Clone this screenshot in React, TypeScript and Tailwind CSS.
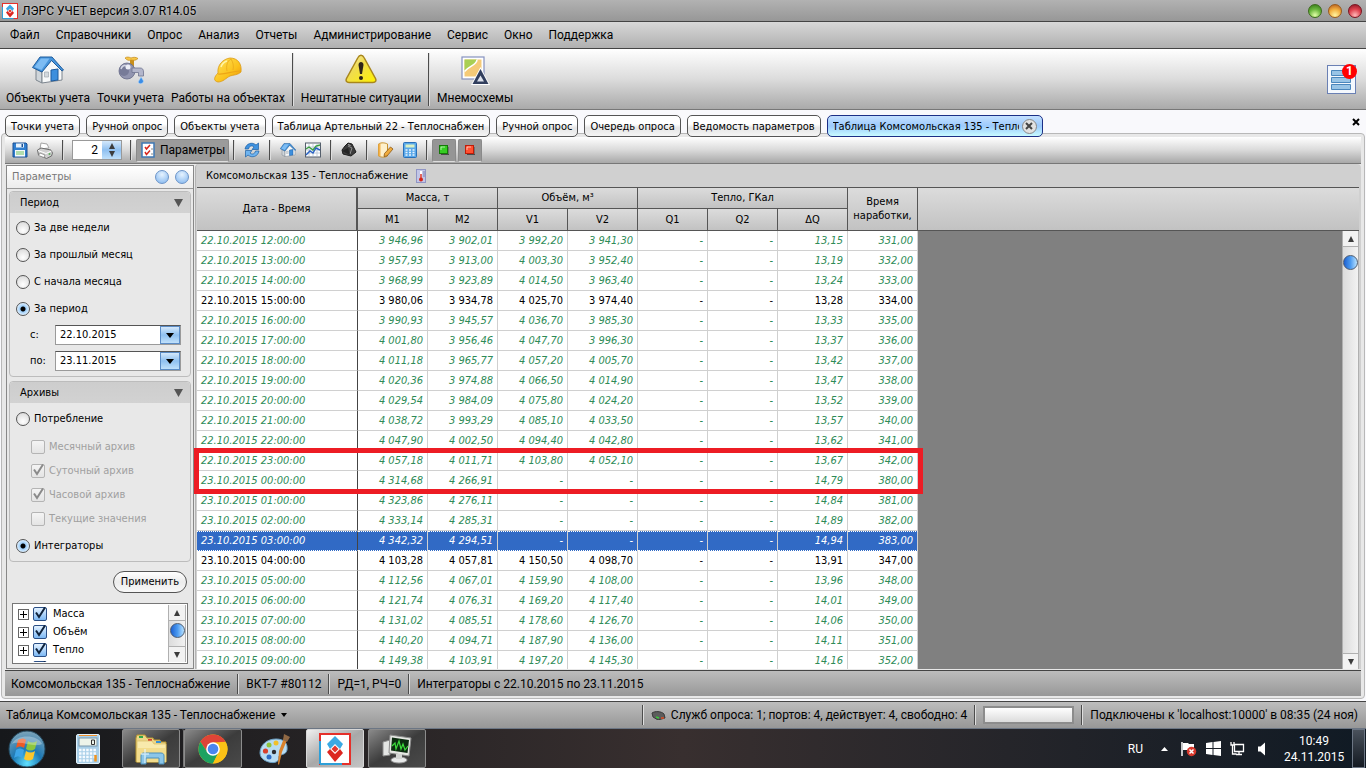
import { useState } from 'react';
import type { ReactNode } from 'react';

const MENU = ['Файл', 'Справочники', 'Опрос', 'Анализ', 'Отчеты', 'Администрирование', 'Сервис', 'Окно', 'Поддержка'];

const TABS = [
  'Точки учета',
  'Ручной опрос',
  'Объекты учета',
  'Таблица Артельный 22 - Теплоснабжен',
  'Ручной опрос',
  'Очередь опроса',
  'Ведомость параметров',
];

const COLUMNS = ['M1', 'M2', 'V1', 'V2', 'Q1', 'Q2', 'ΔQ'];

const ROWS = [
  ['22.10.2015 12:00:00', '3 946,96', '3 902,01', '3 992,20', '3 941,30', '-', '-', '13,15', '331,00'],
  ['22.10.2015 13:00:00', '3 957,93', '3 913,00', '4 003,30', '3 952,40', '-', '-', '13,19', '332,00'],
  ['22.10.2015 14:00:00', '3 968,99', '3 923,89', '4 014,50', '3 963,40', '-', '-', '13,24', '333,00'],
  ['22.10.2015 15:00:00', '3 980,06', '3 934,78', '4 025,70', '3 974,40', '-', '-', '13,28', '334,00'],
  ['22.10.2015 16:00:00', '3 990,93', '3 945,57', '4 036,70', '3 985,30', '-', '-', '13,33', '335,00'],
  ['22.10.2015 17:00:00', '4 001,80', '3 956,46', '4 047,70', '3 996,30', '-', '-', '13,37', '336,00'],
  ['22.10.2015 18:00:00', '4 011,18', '3 965,77', '4 057,20', '4 005,70', '-', '-', '13,42', '337,00'],
  ['22.10.2015 19:00:00', '4 020,36', '3 974,88', '4 066,50', '4 014,90', '-', '-', '13,47', '338,00'],
  ['22.10.2015 20:00:00', '4 029,54', '3 984,09', '4 075,80', '4 024,20', '-', '-', '13,52', '339,00'],
  ['22.10.2015 21:00:00', '4 038,72', '3 993,29', '4 085,10', '4 033,50', '-', '-', '13,57', '340,00'],
  ['22.10.2015 22:00:00', '4 047,90', '4 002,50', '4 094,40', '4 042,80', '-', '-', '13,62', '341,00'],
  ['22.10.2015 23:00:00', '4 057,18', '4 011,71', '4 103,80', '4 052,10', '-', '-', '13,67', '342,00'],
  ['23.10.2015 00:00:00', '4 314,68', '4 266,91', '-', '-', '-', '-', '14,79', '380,00'],
  ['23.10.2015 01:00:00', '4 323,86', '4 276,11', '-', '-', '-', '-', '14,84', '381,00'],
  ['23.10.2015 02:00:00', '4 333,14', '4 285,31', '-', '-', '-', '-', '14,89', '382,00'],
  ['23.10.2015 03:00:00', '4 342,32', '4 294,51', '-', '-', '-', '-', '14,94', '383,00'],
  ['23.10.2015 04:00:00', '4 103,28', '4 057,81', '4 150,50', '4 098,70', '-', '-', '13,91', '347,00'],
  ['23.10.2015 05:00:00', '4 112,56', '4 067,01', '4 159,90', '4 108,00', '-', '-', '13,96', '348,00'],
  ['23.10.2015 06:00:00', '4 121,74', '4 076,31', '4 169,20', '4 117,40', '-', '-', '14,01', '349,00'],
  ['23.10.2015 07:00:00', '4 131,02', '4 085,51', '4 178,60', '4 126,70', '-', '-', '14,06', '350,00'],
  ['23.10.2015 08:00:00', '4 140,20', '4 094,71', '4 187,90', '4 136,00', '-', '-', '14,11', '351,00'],
  ['23.10.2015 09:00:00', '4 149,38', '4 103,91', '4 197,20', '4 145,30', '-', '-', '14,16', '352,00'],
];

// rows with a real archive record, the rest are calculated
const SOLID_ROWS = [3, 16];

const PERIODS = ['За две недели', 'За прошлый месяц', 'С начала месяца', 'За период'];

const ARCHIVES = [
  { label: 'Месячный архив', checked: false },
  { label: 'Суточный архив', checked: true },
  { label: 'Часовой архив', checked: true },
  { label: 'Текущие значения', checked: false },
];

const UI = "font-['Roboto','Noto_Sans',sans-serif]";
const SMALL = "font-['DejaVu_Sans_Condensed','DejaVu_Sans',sans-serif]";

function LersLogo({ size }: { size: number }) {
  return (
    <svg width={size} height={size} viewBox="0 0 32 32">
      <rect x="1" y="1" width="30" height="30" fill="#fff" stroke="#e5302a" strokeWidth="2" />
      <path d="M1 31V8M1 31h22" stroke="#2d9fd8" strokeWidth="2" />
      <path d="M16 3l8 8-3 5-5-5-5 5-3-5z" fill="#3aa9e4" />
      <path d="M8 19l3-3 5 5 5-5 3 4-8 9z" fill="#dc2620" />
      <path d="M16 12.500l3.500 3.500-3.500 3.500-3.500-3.500z" fill="#e2372f" />
    </svg>
  );
}

function HouseIcon({ size }: { size: number }) {
  return (
    <svg width={size} height={size} viewBox="0 0 32 32">
      <path d="M4 15l6 3v11l-6-3z" fill="#cfd5da" stroke="#7c858e" />
      <path d="M10 17l9-11 11 10v10l-20 3z" fill="#f6f8f9" stroke="#7c858e" />
      <path d="M19 16l7-1v11l-7 1z" fill="#3d8fdd" stroke="#1c5a9d" />
      <path d="M12.500 18h4v5h-4z" fill="#d3d9de" stroke="#a1a9b0" strokeWidth=".7" />
      <path d="M.500 13.500L8 3h12l11.500 13-1.500 1L19.500 6.500 10 18z" fill="#4795dc" stroke="#1f5c9c" />
      <path d="M2.500 13L9 4.500h8.500L9.500 16z" fill="#7dbcf3" />
    </svg>
  );
}

function TapIcon() {
  return (
    <svg width="32" height="32" viewBox="0 0 32 32">
      <path d="M15 6h4v7h-4z" fill="#c88f1c" />
      <path d="M10 4c2-1.500 4-1 6 0 2-1 5-1 7 .5-2 2-4 2-7 1.500-2 .7-4 .5-6-2z" fill="#f8c748" stroke="#c18a1c" strokeWidth=".7" />
      <circle cx="12" cy="17" r="8" fill="#9295b0" stroke="#666a86" strokeWidth=".8" />
      <circle cx="9" cy="17" r="5" fill="#777b98" />
      <path d="M17 14h8c2.500 0 3.500 1.500 3.500 4v4h-5v-3.500H17z" fill="#b3b6cb" stroke="#6f738f" strokeWidth=".8" />
      <circle cx="13" cy="13" r="2.500" fill="#eceef6" />
      <path d="M6 15c1-3 3-4 5-3" stroke="#d4d6e4" strokeWidth="1.500" fill="none" />
      <path d="M26 23c2 3 3 4 2 5.500s-4 1.500-4.500 0 1.500-3 2.500-5.500z" fill="#3b8de6" stroke="#a9d2fa" strokeWidth=".6" />
    </svg>
  );
}

function HelmetIcon() {
  return (
    <svg width="32" height="32" viewBox="0 0 32 32">
      <defs>
        <linearGradient id="helmet" x1="0" y1="0" x2="1" y2="1">
          <stop offset="0" stopColor="#ffe45c" />
          <stop offset=".6" stopColor="#fbc21c" />
          <stop offset="1" stopColor="#e98f06" />
        </linearGradient>
      </defs>
      <path d="M6 19C5 11 11 5 18 4c8 0 12 6 11 14-3 3-8 3-11 4-4 2-7 6-12 6-5-1-4-5 0-9z" fill="url(#helmet)" stroke="#dc9a14" strokeWidth=".8" />
      <path d="M6 20c7 1 14-3 22-3" stroke="#eda516" strokeWidth="1.200" fill="none" />
      <path d="M15 17C14 12 15 7 19 5M21 16c1-4 0-8-2-11" stroke="#eeb01e" fill="none" />
      <path d="M9 13c1-3 3-5 6-6" stroke="#fff4a8" strokeWidth="1.600" fill="none" />
    </svg>
  );
}

function WarningIcon() {
  return (
    <svg width="32" height="32" viewBox="0 0 32 32">
      <defs>
        <linearGradient id="warn" x1="0" y1="0" x2="1" y2="1">
          <stop offset="0" stopColor="#f7eecb" />
          <stop offset=".4" stopColor="#f0dc50" />
          <stop offset="1" stopColor="#fff200" />
        </linearGradient>
      </defs>
      <path d="M13 3.500c1.500-3 4.500-3 6 0l11.500 21c1 2.500 0 4-2.500 4H4c-2.500 0-3.500-1.500-2.500-4z" fill="url(#warn)" stroke="#a8861c" strokeWidth="1.500" />
      <path d="M13.500 11c0-4 5-4 5 0l-1.500 9h-2z" fill="#2e2418" />
      <circle cx="16" cy="24" r="2" fill="#2e2418" />
    </svg>
  );
}

function SchemeIcon() {
  return (
    <svg width="32" height="32" viewBox="0 0 32 32">
      <rect x="3" y="3" width="22" height="22" fill="#fff" stroke="#8592bf" strokeWidth="1.200" />
      <path d="M5.500 5.500h17v17h-17z" fill="#f5ca78" />
      <path d="M5.500 5.500H18c0 6-8 6-12.500 12z" fill="#a9cf54" />
      <path d="M18 5.500c0 6-8 6-12.500 12" stroke="#fff" strokeWidth="1.500" fill="none" />
      <path d="M21.500 13l9.500 18H12z" fill="#fff" />
      <path d="M21.500 15l8 15h-16z" fill="#323f5e" />
      <path d="M21.500 21.500l3.500 6h-7z" fill="#dfe3ec" />
    </svg>
  );
}

function SaveIcon() {
  return (
    <svg width="16" height="16" viewBox="0 0 16 16">
      <path d="M1 1h13l1 1v13H1z" fill="#2f7ed0" stroke="#1a4f92" />
      <path d="M4 1.500h8v4H4z" fill="#e8f2fb" />
      <path d="M9.500 2h1.500v3H9.500z" fill="#1a4f92" />
      <path d="M3 8h10v6.500H3z" fill="#f6f9fc" />
      <path d="M4 10h8M4 12h8" stroke="#6cbf5c" />
    </svg>
  );
}

function PrinterIcon() {
  return (
    <svg width="18" height="17" viewBox="0 0 18 17">
      <path d="M4 7L5 1l6 1 2 4z" fill="#fff" stroke="#a4a4a4" />
      <path d="M1.500 8L5 6l10 2 1.500 3-1 3-5 2.500-8-3.500z" fill="#cfcfcf" stroke="#6e6e6e" />
      <path d="M2 8.500l8 3 5.500-2.500" stroke="#fff" fill="none" />
      <path d="M4 11l5 2-1 2.500-5.500-2z" fill="#fff" stroke="#888" strokeWidth=".8" />
      <circle cx="13.500" cy="12" r="1" fill="#58b05a" />
    </svg>
  );
}

function ChecklistIcon() {
  return (
    <svg className="shrink-0" width="16" height="16" viewBox="0 0 16 16">
      <rect x="2" y="1" width="12" height="14" fill="#fff" stroke="#3f79b5" strokeWidth="1.500" />
      <path d="M5 5l1.500 2L10 3M5 10l1.500 2.500L10 8.500" stroke="#d8261c" strokeWidth="1.500" fill="none" />
      <path d="M11 7h2M11 12h2" stroke="#888" />
    </svg>
  );
}

function RefreshIcon() {
  return (
    <svg width="16" height="16" viewBox="0 0 16 16">
      <path d="M1 7C2 1.500 8-.5 12 3l2.500-2v6.500H8L10 5C8 3 5 4 4.500 7z" fill="#3f92e0" stroke="#1d5ea2" strokeWidth=".7" />
      <path d="M15 9c-1 5.500-7 7.500-11 4l-2.500 2V8.500H8L6 11c2 2 5 1 5.500-2z" fill="#6fb4f0" stroke="#1d5ea2" strokeWidth=".7" />
    </svg>
  );
}

function ChartIcon() {
  return (
    <svg width="16" height="16" viewBox="0 0 16 16">
      <rect x=".5" y="1" width="15" height="14" fill="#fdfefe" stroke="#555f6c" />
      <path d="M4 2v12M8 2v12M12 2v12M1 5h14M1 8h14M1 11h14" stroke="#b4c2d3" strokeWidth=".8" />
      <path d="M1 7l3-2 4 3 3-4 4-1" stroke="#3a9e3d" strokeWidth="1.400" fill="none" />
      <path d="M1 13l4-4 3 2 3-5 4 2" stroke="#2861c4" strokeWidth="1.400" fill="none" />
    </svg>
  );
}

function BlackBoxIcon() {
  return (
    <svg width="16" height="16" viewBox="0 0 16 16">
      <path d="M4 4l3-3 4 1 4 8-5 4-8-2-1-4z" fill="#3c3c3c" stroke="#1c1c1c" />
      <path d="M7 4l4 2-2 6" stroke="#8e8e8e" fill="none" />
      <path d="M7 2.500l2.500 1" stroke="#b5b5b5" />
      <path d="M1 9l6-3 2 7z" fill="#242424" />
    </svg>
  );
}

function ScriptIcon() {
  return (
    <svg width="17" height="16" viewBox="0 0 17 16">
      <path d="M1.500 2c3-2 7-1 9 0v12c-3 2-7 1-9 0z" fill="#fdf0cc" stroke="#c8902c" />
      <path d="M2.500 2v12" stroke="#f5b24a" strokeWidth="2" />
      <path d="M7.500 11.500L13.500 5l2.500 2-6 7-3 .5z" fill="#f0ab3c" stroke="#8a5714" strokeWidth=".8" />
    </svg>
  );
}

function SmallCalcIcon() {
  return (
    <svg width="14" height="16" viewBox="0 0 14 16">
      <rect x=".5" y=".5" width="13" height="15" rx="1" fill="#5aa9ea" stroke="#2a70b8" />
      <path d="M2.500 2.500h9v3h-9z" fill="#d9f0c4" />
      <path d="M2.500 8h9M2.500 10.500h9M2.500 13h9" stroke="#e9f4fd" strokeWidth="1.400" strokeDasharray="2 1.500" />
    </svg>
  );
}

function ThermoIcon() {
  return (
    <svg width="10" height="14" viewBox="0 0 10 14">
      <rect x=".5" y=".5" width="9" height="13" fill="#c3c6e6" stroke="#9095c4" />
      <path d="M5 2v8" stroke="#fff" strokeWidth="2" />
      <path d="M5 5v5" stroke="#d4261c" strokeWidth="1.400" />
      <circle cx="5" cy="10.500" r="2" fill="#d4261c" />
      <path d="M7 3h2M7 5h2M7 7h2" stroke="#5d639c" strokeWidth=".7" />
    </svg>
  );
}

function Square({ color, edge }: { color: string; edge: string }) {
  return (
    <svg width="10" height="10" viewBox="0 0 10 10">
      <path d="M2 9.500h8V2" stroke="#4a4a4a" fill="none" />
      <rect x=".5" y=".5" width="8" height="8" fill={color} stroke={edge} />
      <path d="M2 5V2h4" stroke="#fff" strokeOpacity=".6" fill="none" />
    </svg>
  );
}

function Arrow({ down = false }: { down?: boolean }) {
  return (
    <svg width="8" height="6" viewBox="0 0 8 6">
      <path d={down ? 'M1 0h6L4 6z' : 'M1 6h6L4 0z'} fill="#3c3c3c" />
    </svg>
  );
}

function BigButton({ icon, label }: { icon: ReactNode; label: string }) {
  return (
    <button className="flex flex-col items-center gap-1 pt-0.5">
      {icon}
      <span className="leading-4">{label}</span>
    </button>
  );
}

// engraved vertical line between toolbar and status items
function Divider({ className = 'h-5' }: { className?: string }) {
  return <span className={`w-0.5 shrink-0 border-l border-[#4c4c4c] border-r border-r-[#dedede] ${className}`} />;
}

function Radio({ name, label, checked, onChange }: { name: string; label: string; checked: boolean; onChange: () => void }) {
  return (
    <label className="flex h-[27px] items-center gap-1">
      <input
        type="radio"
        name={name}
        checked={checked}
        onChange={onChange}
        className="size-[14px] appearance-none rounded-full border border-[#555] bg-[radial-gradient(circle_at_50%_70%,#fff,#d4d4d4)] checked:bg-[radial-gradient(circle_at_50%_50%,#000_0,#000_2px,#9ccdf8_3px,#dff0ff_6px,#4b8fd8_7px)]"
      />
      {label}
    </label>
  );
}

function Check({ label, checked, disabled }: { label: string; checked: boolean; disabled?: boolean }) {
  const [on, setOn] = useState(checked);
  return (
    <label className={disabled ? 'flex h-6 items-center gap-1 text-[#a0a0a0]' : 'flex h-[18px] items-center gap-[6px]'}>
      <span className="relative size-[14px]">
        <input
          type="checkbox"
          checked={on}
          disabled={disabled}
          onChange={() => setOn(!on)}
          className="block size-[14px] appearance-none rounded-xs border border-[#2b4f86] bg-linear-to-b from-[#e4f2ff] to-[#7cb8f4] disabled:border-[#b4b4b4] disabled:from-[#f4f4f4] disabled:to-[#e4e4e4]"
        />
        {on && (
          <svg className="absolute left-0 top-0" width="14" height="14" viewBox="0 0 14 14">
            <path d="M3 5.500L6 10l6-9.500" stroke={disabled ? '#8a8a8a' : '#10233c'} strokeWidth="2" fill="none" />
          </svg>
        )}
      </span>
      {label}
    </label>
  );
}

function DateBox({ id, label, value }: { id: string; label: string; value: string }) {
  return (
    <div className="flex h-[26px] items-center pl-[20px]">
      <label htmlFor={id} className="w-[25px]">
        {label}
      </label>
      <div className="flex h-5 w-[126px] border border-[#9a9a9a] border-t-[#555] bg-white">
        <input id={id} defaultValue={value} className="w-0 grow px-1 outline-none" />
        <button aria-label="Календарь" className="flex w-5 items-center justify-center border border-[#5b8cc6] bg-linear-to-b from-[#d4e8fb] via-[#8fc0f0] to-[#bfe0fb]">
          <svg width="8" height="5" viewBox="0 0 8 5">
            <path d="M0 0h8L4 5z" fill="#000" />
          </svg>
        </button>
      </div>
    </div>
  );
}

function Group({ title, children }: { title: string; children: ReactNode }) {
  return (
    <section className="rounded-sm border border-[#bcbcbc] bg-[#e8e8e8] pb-0.5">
      <button className="flex h-[21px] w-full items-center justify-between rounded-t-sm bg-linear-to-b from-[#cdcdcd] to-[#d2d2d2] pl-[10px] pr-[7px]">
        {title}
        <svg width="9" height="8" viewBox="0 0 9 8">
          <path d="M0 0h9L4.500 8z" fill="#555" />
        </svg>
      </button>
      {children}
    </section>
  );
}

function Scrollbar({ className, gap }: { className: string; gap: string }) {
  return (
    <div className={`flex flex-col items-center border-x border-[#b0b0b0] bg-linear-to-r from-[#dcdcdc] to-[#f2f2f2] ${className}`}>
      <button aria-label="Вверх" className="flex h-4 w-full shrink-0 items-center justify-center border-b border-[#b0b0b0] bg-[#f2f2f2]">
        <Arrow />
      </button>
      <div className={`flex min-h-0 w-full grow flex-col items-center ${gap}`}>
        <span className="size-[15px] shrink-0 rounded-full border border-[#4a5a70] bg-linear-to-r from-[#1d5fd0] via-[#4c9bf0] to-[#b8e2ff]" />
      </div>
      <button aria-label="Вниз" className="flex h-4 w-full shrink-0 items-center justify-center border-t border-[#b0b0b0] bg-[#f2f2f2]">
        <Arrow down />
      </button>
    </div>
  );
}

function TopBars() {
  return (
    <>
      <header className="flex h-[22px] shrink-0 items-center justify-between border-b border-[#444] bg-linear-to-b from-[#b2b2b2] to-[#979797] pl-0.5 pr-1">
        <div className="flex items-center gap-1 [text-shadow:0_0_3px_#ddd]">
          <LersLogo size={16} />
          <h1>ЛЭРС УЧЕТ версия 3.07 R14.05</h1>
        </div>
        <div className="flex items-center gap-[6px]">
          <button aria-label="Свернуть" className="size-[14px] rounded-full border border-[#3c6a1c] bg-[radial-gradient(circle_at_50%_85%,#e2ffa8,#6db840_50%,#2f7412)]" />
          <button aria-label="Развернуть" className="size-[14px] rounded-full border border-[#9a5a1c] bg-[radial-gradient(circle_at_50%_85%,#fff4a0,#f2b040_50%,#b0541c)]" />
          <button aria-label="Закрыть" className="size-[14px] rounded-full border border-[#7a1420] bg-[radial-gradient(circle_at_50%_85%,#ffb8b8,#e04450_50%,#861020)]" />
        </div>
      </header>

      <nav className="flex h-[27px] shrink-0 items-center gap-4 border-b border-[#444] bg-linear-to-b from-[#d8d8d8] to-[#b0b0b0] pl-[10px]">
        {MENU.map((item) => (
          <button key={item}>{item}</button>
        ))}
      </nav>

      <div className="flex h-[61px] shrink-0 items-center justify-between border-b border-[#777] bg-linear-to-b from-white via-[#dcdcdc] to-[#aaa] px-[6px]">
        <div className="flex items-center gap-[7px]">
          <BigButton icon={<HouseIcon size={32} />} label="Объекты учета" />
          <BigButton icon={<TapIcon />} label="Точки учета" />
          <BigButton icon={<HelmetIcon />} label="Работы на объектах" />
          <Divider className="h-[53px]" />
          <BigButton icon={<WarningIcon />} label="Нештатные ситуации" />
          <Divider className="h-[53px]" />
          <BigButton icon={<SchemeIcon />} label="Мнемосхемы" />
        </div>
        <button aria-label="Уведомления" className="relative mr-1 size-[29px] border border-[#6a80b4] bg-[#f4f8fd]">
          <svg width="27" height="27" viewBox="0 0 27 27">
            <path d="M3.500 4.500h19v5h-19zM3.500 11.500h19v5h-19zM3.500 18.500h19v5h-19z" fill="#98c4e6" stroke="#4a86bc" />
          </svg>
          <span className="absolute -right-0.5 -top-0.5 flex size-[15px] items-center justify-center rounded-full bg-[#f00] text-xs font-bold text-white">1</span>
        </button>
      </div>
    </>
  );
}

function Tabs() {
  return (
    <div className={`relative z-10 flex h-[27px] shrink-0 items-end gap-[6px] pl-[5px] pr-[6px] text-[11px] ${SMALL}`}>
      {TABS.map((tab, i) => (
        <button
          key={i}
          className="h-[22px] whitespace-nowrap rounded-[5px] border border-[#555] bg-linear-to-b from-white from-40% via-[#e6e6e6] via-60% to-[#f4f4f4] px-[5px] pt-0.5"
        >
          {tab}
        </button>
      ))}
      <div className="flex h-[22px] w-[216px] items-center gap-[3px] rounded-[5px] border border-[#1c2f86] bg-linear-to-b from-[#c4e0ff] via-[#9ccafc] to-[#c8fbff] px-[5px]">
        <button className="w-[186px] overflow-hidden whitespace-nowrap pt-0.5 text-left">Таблица Комсомольская 135 - Теплоснабжение</button>
        <button aria-label="Закрыть вкладку" className="flex size-[15px] shrink-0 items-center justify-center rounded-full border border-[#888] bg-[#e2e2e2]">
          <svg width="8" height="8" viewBox="0 0 8 8">
            <path d="M1 1l6 6M7 1L1 7" stroke="#444" strokeWidth="2" />
          </svg>
        </button>
      </div>
      <button aria-label="Закрыть все" className="mb-[11px] ml-auto">
        <svg width="8" height="8" viewBox="0 0 8 8">
          <path d="M1 1l6 6M7 1L1 7" stroke="#000" strokeWidth="2" />
        </svg>
      </button>
    </div>
  );
}

function Toolbar() {
  return (
    <div className="flex h-[27px] shrink-0 items-center border-b border-[#777] bg-linear-to-b from-white via-[#dadada] to-[#a8a8a8] pl-[7px]">
      <div className="flex items-center gap-2">
        <button aria-label="Сохранить">
          <SaveIcon />
        </button>
        <button aria-label="Печать">
          <PrinterIcon />
        </button>
        <Divider />
        <div className="flex h-5 w-[50px] border border-[#999] bg-white">
          <input aria-label="Знаков после запятой" defaultValue="2" className="w-0 grow pr-1 text-right outline-none" />
          <button aria-label="Изменить" className="flex w-[19px] flex-col items-center justify-center gap-0.5 bg-linear-to-b from-[#d4e8fb] via-[#8fc0f0] to-[#bfe0fb]">
            <Arrow />
            <Arrow down />
          </button>
        </div>
        <Divider />
      </div>
      <button className="mx-1 flex h-[23px] w-[93px] items-center gap-1 rounded-xs border border-[#8a8a8a] border-b-[#ddd] bg-[#9b9b9b] px-[3px]">
        <ChecklistIcon />
        Параметры
      </button>
      <div className="flex items-center gap-[9px]">
        <Divider />
        <button aria-label="Обновить">
          <RefreshIcon />
        </button>
        <Divider />
        <button aria-label="Объект учета">
          <HouseIcon size={16} />
        </button>
        <button aria-label="График">
          <ChartIcon />
        </button>
        <Divider />
        <button aria-label="Опросить">
          <BlackBoxIcon />
        </button>
        <Divider />
        <button aria-label="Журнал">
          <ScriptIcon />
        </button>
        <button aria-label="Калькулятор">
          <SmallCalcIcon />
        </button>
        <Divider />
      </div>
      <div className="ml-1 flex gap-0.5">
        <button aria-label="Достоверные" className="flex h-[23px] w-6 items-center justify-center rounded-xs border border-[#8a8a8a] border-b-[#ddd] bg-[#959595]">
          <Square color="#35cc22" edge="#157808" />
        </button>
        <button aria-label="Недостоверные" className="flex h-[23px] w-6 items-center justify-center rounded-xs border border-[#8a8a8a] border-b-[#ddd] bg-[#959595]">
          <Square color="#ff5030" edge="#c01c08" />
        </button>
      </div>
    </div>
  );
}

function SidePanel() {
  const [period, setPeriod] = useState('За период');
  const [source, setSource] = useState('Интеграторы');
  const bead = 'size-[14px] rounded-full border border-[#6c94c8] bg-[radial-gradient(circle_at_50%_30%,#e6f3ff,#7fb4ee)]';

  return (
    <aside className={`ml-px mt-px flex w-[188px] shrink-0 flex-col border border-[#888] bg-[#e8e8e8] text-[11px] ${SMALL}`}>
      <div className="flex h-[23px] shrink-0 items-center justify-between border-b border-[#999] bg-linear-to-b from-white to-[#ececec] pl-[5px] pr-1">
        <h2 className="text-[#777]">Параметры</h2>
        <div className="flex gap-[6px]">
          <button aria-label="Закрепить" className={bead} />
          <button aria-label="Скрыть" className={bead} />
        </div>
      </div>
      <div className="flex min-h-0 grow flex-col gap-1 px-0.5 pb-1 pt-0.5">
        <Group title="Период">
          <div className="px-[6px] pt-px">
            {PERIODS.map((p) => (
              <Radio key={p} name="period" label={p} checked={period === p} onChange={() => setPeriod(p)} />
            ))}
          </div>
          <DateBox id="from" label="с:" value="22.10.2015" />
          <DateBox id="to" label="по:" value="23.11.2015" />
        </Group>
        <Group title="Архивы">
          <div className="px-[6px] pt-0.5">
            <Radio name="source" label="Потребление" checked={source === 'Потребление'} onChange={() => setSource('Потребление')} />
            <div className="pb-px pl-[15px] pt-[3px]">
              {ARCHIVES.map((a) => (
                <Check key={a.label} label={a.label} checked={a.checked} disabled />
              ))}
            </div>
            <Radio name="source" label="Интеграторы" checked={source === 'Интеграторы'} onChange={() => setSource('Интеграторы')} />
          </div>
        </Group>
        <button className="mb-[6px] mr-1 mt-[5px] h-[22px] shrink-0 self-end rounded-full border border-[#555] bg-linear-to-b from-white via-[#ececec] to-[#f8f8f8] px-[7px]">
          Применить
        </button>
        <div className="mx-[3px] flex min-h-0 grow border border-[#777] bg-white p-px">
          <ul className="flex grow flex-col overflow-hidden pl-1">
            {['Масса', 'Объём', 'Тепло', ''].map((item) => (
              <li key={item} className="flex h-[18px] shrink-0 items-center gap-1">
                <button aria-label="Развернуть" className="flex size-[11px] items-center justify-center border border-[#666] bg-white">
                  <svg width="7" height="7" viewBox="0 0 7 7">
                    <path d="M3.500 0v7M0 3.500h7" stroke="#000" />
                  </svg>
                </button>
                <Check label={item} checked />
              </li>
            ))}
          </ul>
          <Scrollbar className="w-[18px]" gap="pt-0.5" />
        </div>
      </div>
    </aside>
  );
}

function DataTable() {
  const th = 'border-b border-r border-[#555] bg-linear-to-b from-[#dcdcdc] to-[#c2c2c2] p-0 font-normal';

  return (
    <main className="ml-px flex min-w-0 grow flex-col rounded-t-sm border-l border-[#b4b4b4] bg-[#d0d0d0] pl-px">
      <div className={`flex h-[23px] shrink-0 items-center gap-2 pl-[9px] text-[11px] ${SMALL}`}>
        <h2>Комсомольская 135 - Теплоснабжение</h2>
        <ThermoIcon />
      </div>
      <div className="relative mr-0.5 min-h-0 grow border-t border-[#555] bg-[#808080]">
        <div className="h-full overflow-hidden">
          <table className={`w-full table-fixed border-separate border-spacing-0 text-[11px] leading-[14px] ${SMALL}`}>
            <colgroup>
              <col className="w-[161px]" />
              {COLUMNS.map((c) => (
                <col key={c} className="w-[70px]" />
              ))}
              <col className="w-[70px]" />
              <col />
            </colgroup>
            <thead>
              <tr className="h-[21px]">
                <th rowSpan={2} className={`${th} border-r-2`}>
                  Дата - Время
                </th>
                <th colSpan={2} className={th}>
                  Масса, т
                </th>
                <th colSpan={2} className={th}>
                  Объём, м³
                </th>
                <th colSpan={3} className={th}>
                  Тепло, ГКал
                </th>
                <th rowSpan={2} className={th}>
                  Время наработки,
                </th>
                <th rowSpan={2} className={`${th} border-r-0`} />
              </tr>
              <tr className="h-[22px]">
                {COLUMNS.map((c) => (
                  <th key={c} className={th}>
                    {c}
                  </th>
                ))}
              </tr>
            </thead>
            <tbody>
              {ROWS.map((row, i) => (
                <tr
                  key={row[0]}
                  className={
                    i === 15
                      ? 'h-5 bg-[#316ac5] italic text-white'
                      : SOLID_ROWS.includes(i)
                        ? 'h-5 bg-white text-black'
                        : 'h-5 bg-white italic text-[#2e8b57]'
                  }
                >
                  {row.map((value, j) => (
                    <td
                      key={j}
                      className={`border-b border-r border-[#d0d0d0] p-0 ${j === 0 ? 'border-r-[#444] pl-1' : 'pr-1 text-right'} ${
                        i === 15 ? 'border-t border-y-white [border-block-style:dotted]' : ''
                      }`}
                    >
                      {value}
                    </td>
                  ))}
                  <td className="bg-[#808080] p-0" />
                </tr>
              ))}
            </tbody>
          </table>
        </div>
        <div className="pointer-events-none absolute -left-[3px] top-[260px] h-[46px] w-[729px] border-[5px] border-[#ed1c24]" />
        <Scrollbar className="absolute bottom-0 right-0 top-[43px] w-[17px]" gap="pt-2" />
      </div>
    </main>
  );
}

function StatusBars() {
  return (
    <footer className="flex h-[27px] shrink-0 items-center justify-between border-t border-[#444] bg-linear-to-b from-[#bdbdbd] to-[#979797] pl-[6px] pr-2">
      <button className="flex items-center gap-[6px]">
        Таблица Комсомольская 135 - Теплоснабжение
        <svg width="6" height="4" viewBox="0 0 6 4">
          <path d="M0 0h6L3 4z" fill="#000" />
        </svg>
      </button>
      <div className="flex items-center gap-[7px]">
        <Divider />
        <span className="flex items-center gap-[5px]">
          <svg width="15" height="9" viewBox="0 0 15 9">
            <path d="M1 2c3-2 9-2 12 1l1 4-7 2-5-3z" fill="#5c5c5c" stroke="#3a3a3a" />
            <path d="M5 6l3 1" stroke="#37c837" strokeWidth="1.500" />
            <path d="M10 7h3" stroke="#e04c20" strokeWidth="1.500" />
          </svg>
          Служб опроса: 1; портов: 4, действует: 4, свободно: 4
        </span>
        <Divider />
        <div role="progressbar" className="h-[18px] w-[91px] border-2 border-[#8c8c8c] bg-linear-to-b from-white to-[#dcdcdc]" />
        <Divider />
        <span>Подключены к 'localhost:10000' в 08:35 (24 ноя)</span>
      </div>
    </footer>
  );
}

function TaskButton({ children, active = false, label }: { children: ReactNode; active?: boolean; label: string }) {
  return (
    <button
      aria-label={label}
      className={
        active
          ? 'flex h-[39px] w-[58px] items-center justify-center rounded-xs border border-[#d8d8d8] bg-linear-to-br from-[#f0f0f0] via-[#a8a8a8] to-[#c4c4c4]'
          : 'flex h-[39px] w-[58px] items-center justify-center rounded-xs border border-[#8c8c8c] bg-linear-to-br from-[#8a8a8a] via-[#3c3c3c] to-[#4a4a4a]'
      }
    >
      {children}
    </button>
  );
}

function Taskbar() {
  return (
    <div className="flex h-10 shrink-0 items-center justify-between border-t border-[#6c7684] bg-linear-to-r from-[#16181b] via-[#382f2f] via-50% to-[#101a24] text-xs text-white">
      <div className="flex items-center">
        <button aria-label="Пуск" className="ml-2">
          <svg width="38" height="38" viewBox="0 0 38 38">
            <defs>
              <radialGradient id="orb" cx=".5" cy=".9" r=".9">
                <stop offset="0" stopColor="#5fe0ff" />
                <stop offset=".45" stopColor="#1c78b4" />
                <stop offset="1" stopColor="#7ea4b8" />
              </radialGradient>
            </defs>
            <circle cx="19" cy="19" r="18" fill="url(#orb)" stroke="#24495e" />
            <path d="M10 10c3-2 6-2 8 0l-2 8c-3-2-5-2-8 0z" fill="#ee5a24" />
            <path d="M20 11c3 2 6 2 9 0l-2 8c-3 2-6 2-9 0z" fill="#8cc63e" />
            <path d="M8 20c3-2 5-2 8 0l-2 8c-3-2-5-2-8 0z" fill="#3da5e8" />
            <path d="M18 21c3 2 6 2 9 0l-2 8c-3 2-6 2-9 0z" fill="#fcc72c" />
            <path d="M4 14C8 4 30 4 34 14 26 18 12 10 4 14z" fill="#fff" fillOpacity=".3" />
          </svg>
        </button>
        <button aria-label="Калькулятор" className="ml-[30px]">
          <svg width="24" height="32" viewBox="0 0 24 32">
            <rect x=".5" y="1.500" width="23" height="29" rx="1.500" fill="#a9cfe8" stroke="#e4f2fa" />
            <rect x="3" y="5" width="18" height="8" fill="#eef4ea" stroke="#7a98ac" />
            <path d="M15.500 7h3v4.500h-3z" stroke="#333" fill="none" />
            <path d="M3 2.500h18" stroke="#f0902c" />
            <path d="M3 17h18M3 20.500h18M3 24h18M3 27.500h14" stroke="#f6fbff" strokeWidth="2.400" strokeDasharray="2.500 1.100" />
            <path d="M19.500 22v6.500" stroke="#ef9320" strokeWidth="2.500" />
          </svg>
        </button>
        <div className="ml-[22px] flex">
          <TaskButton label="Проводник">
            <svg width="34" height="32" viewBox="0 0 34 32">
              <path d="M2 5l1-3h8l2 3h6l1 2h6l1 2h5v20H2z" fill="#ecd688" stroke="#b8962f" />
              <path d="M5 3h4v2H5z" fill="#2fa84a" />
              <path d="M14 6h4v2h-4z" fill="#da3b30" />
              <path d="M22 8h5v2h-5z" fill="#3590d8" />
              <path d="M3 8h15l2 3h12v18H3z" fill="#f8eaac" stroke="#d9bd64" strokeWidth=".7" />
              <path d="M3 15h29v14H3z" fill="#f2dc8c" />
              <path d="M7 31v-8c0-2 1-3 3-3h17c2 0 3 1 3 3v8h-5v-6H12v6z" fill="#8cc6e8" stroke="#4a90bc" />
              <path d="M11 16v14M7 21h8" stroke="#e9f8ff" strokeOpacity=".7" strokeWidth="1.500" />
            </svg>
          </TaskButton>
          <span className="h-[39px] w-1 rounded-r-xs border-r border-[#777]" />
        </div>
        <TaskButton label="Chrome">
          <svg width="30" height="30" viewBox="0 0 30 30">
            <circle cx="15" cy="15" r="14.500" fill="#fbc116" />
            <path d="M2.440 7.750A14.500 14.500 0 0 1 27.560 7.750L15 8.500 9.400 18.200z" fill="#de4437" />
            <path d="M2.440 7.750A14.500 14.500 0 0 0 15 29.500L20.600 18.200 9.400 18.200z" fill="#1da261" />
            <path d="M15 29.500L20.600 18.200 20.600 9 28 8.500A14.500 14.500 0 0 1 15 29.500z" fill="#fbc116" />
            <circle cx="15" cy="15" r="6.800" fill="#fff" />
            <circle cx="15" cy="15" r="5.300" fill="#4a86ee" />
          </svg>
        </TaskButton>
        <button aria-label="Paint" className="ml-[17px]">
          <svg width="32" height="32" viewBox="0 0 32 32">
            <path d="M1 20C1 12 8 6 17 6c8 0 12 4 11 11-1 5-6 4-8 6-1 2 1 4-3 6S1 28 1 20z" fill="#b8dcf2" stroke="#6ba0c4" />
            <circle cx="6.500" cy="18" r="2.600" fill="#d8402c" />
            <circle cx="10" cy="12" r="2.500" fill="#8fc43c" />
            <circle cx="17" cy="10" r="2.500" fill="#f0c02c" />
            <circle cx="10" cy="24" r="2.500" fill="#2f6cc4" />
            <circle cx="15" cy="19" r="2.200" fill="#2d2c2e" />
            <path d="M28 7l-5 12-3 13-1-1 1-13 5-13z" fill="#d9822c" />
            <path d="M25 1l6 3-3 5-4-2z" fill="#8f6844" />
          </svg>
        </button>
        <div className="ml-[15px] flex gap-1">
          <TaskButton label="ЛЭРС УЧЕТ" active>
            <LersLogo size={32} />
          </TaskButton>
          <TaskButton label="Монитор">
            <svg width="32" height="30" viewBox="0 0 32 30">
              <path d="M2 8l7-2v15l-7 1z" fill="#e4e6e4" stroke="#8c8c8c" />
              <path d="M9 1l21 3-2 18-20-3z" fill="#e6e8e4" stroke="#8c8c8c" />
              <path d="M11 3.500l17 2.500-1.500 13-16.500-2.500z" fill="#0c2c10" />
              <path d="M11 12l3-3 1 6 3-8 2 8 2-5 2 6 3-4" stroke="#3ddc3c" strokeWidth="1.200" fill="none" />
              <ellipse cx="18" cy="26" rx="8" ry="3" fill="#e8eaea" stroke="#999" />
              <path d="M15 20h6v5h-6z" fill="#d4d6d4" />
            </svg>
          </TaskButton>
        </div>
      </div>

      <div className="flex h-full items-center">
        <span className="mr-[18px]">RU</span>
        <svg width="7" height="4" viewBox="0 0 7 4">
          <path d="M0 4h7L3.500 0z" fill="#fff" />
        </svg>
        <div className="ml-[13px] flex items-center gap-[9px]">
          <svg width="16" height="16" viewBox="0 0 16 16">
            <path d="M1 1v14" stroke="#fff" strokeWidth="1.500" />
            <path d="M2 2h5l1 1h5v7H8L7 9H2z" fill="#fff" />
            <circle cx="10.500" cy="10.500" r="4.700" fill="#d8382c" />
            <path d="M8.500 8.500l4 4M12.500 8.500l-4 4" stroke="#fff" strokeWidth="1.500" />
          </svg>
          <svg width="15" height="15" viewBox="0 0 15 15">
            <path d="M0 2l6.500-1v6H0zM7.500.9L15 0v7H7.500zM0 8h6.500v6L0 13zM7.500 8H15v7l-7.500-1z" fill="#fff" />
          </svg>
          <svg width="15" height="15" viewBox="0 0 15 15">
            <path d="M4.500 3.500h9v7h-9zM6 13.500h6M9 10.500v3M1 1v3h3V1M2.500 4v9h4" stroke="#fff" strokeWidth="1.300" fill="none" />
          </svg>
        </div>
        <svg className="ml-[13px]" width="8" height="14" viewBox="0 0 8 14">
          <path d="M0 4.500h2.500L7 .5v13L2.500 9.500H0z" fill="#fff" />
        </svg>
        <div className="ml-[18px] w-[60px] text-center leading-4">
          <div>10:49</div>
          <div>24.11.2015</div>
        </div>
        <button aria-label="Показать рабочий стол" className="ml-2 mr-px h-full w-[13px] border border-[#6c7684] bg-linear-to-b from-[#4a525c] to-[#141a22]" />
      </div>
    </div>
  );
}

export default function App() {
  return (
    <div className={`flex h-screen flex-col overflow-hidden bg-[#f9f9fc] text-xs leading-4 text-black ${UI}`}>
      <TopBars />
      <Tabs />
      <div className="mx-px -mt-1 mb-0.5 flex min-h-0 grow flex-col rounded-sm border border-[#b8b8b8] bg-[#e8e8e8] px-[3px] pb-0.5 pt-[3px]">
        <Toolbar />
        <div className="flex min-h-0 grow">
          <SidePanel />
          <DataTable />
        </div>
        <div className="mt-px flex h-[26px] shrink-0 items-center gap-[7px] border-t border-[#444] bg-linear-to-b from-[#bdbdbd] to-[#979797] pl-[6px]">
          <span>Комсомольская 135 - Теплоснабжение</span>
          <Divider />
          <span>ВКТ-7 #80112</span>
          <Divider />
          <span>РД=1, РЧ=0</span>
          <Divider />
          <span>Интеграторы с 22.10.2015 по 23.11.2015</span>
        </div>
      </div>
      <StatusBars />
      <Taskbar />
    </div>
  );
}
